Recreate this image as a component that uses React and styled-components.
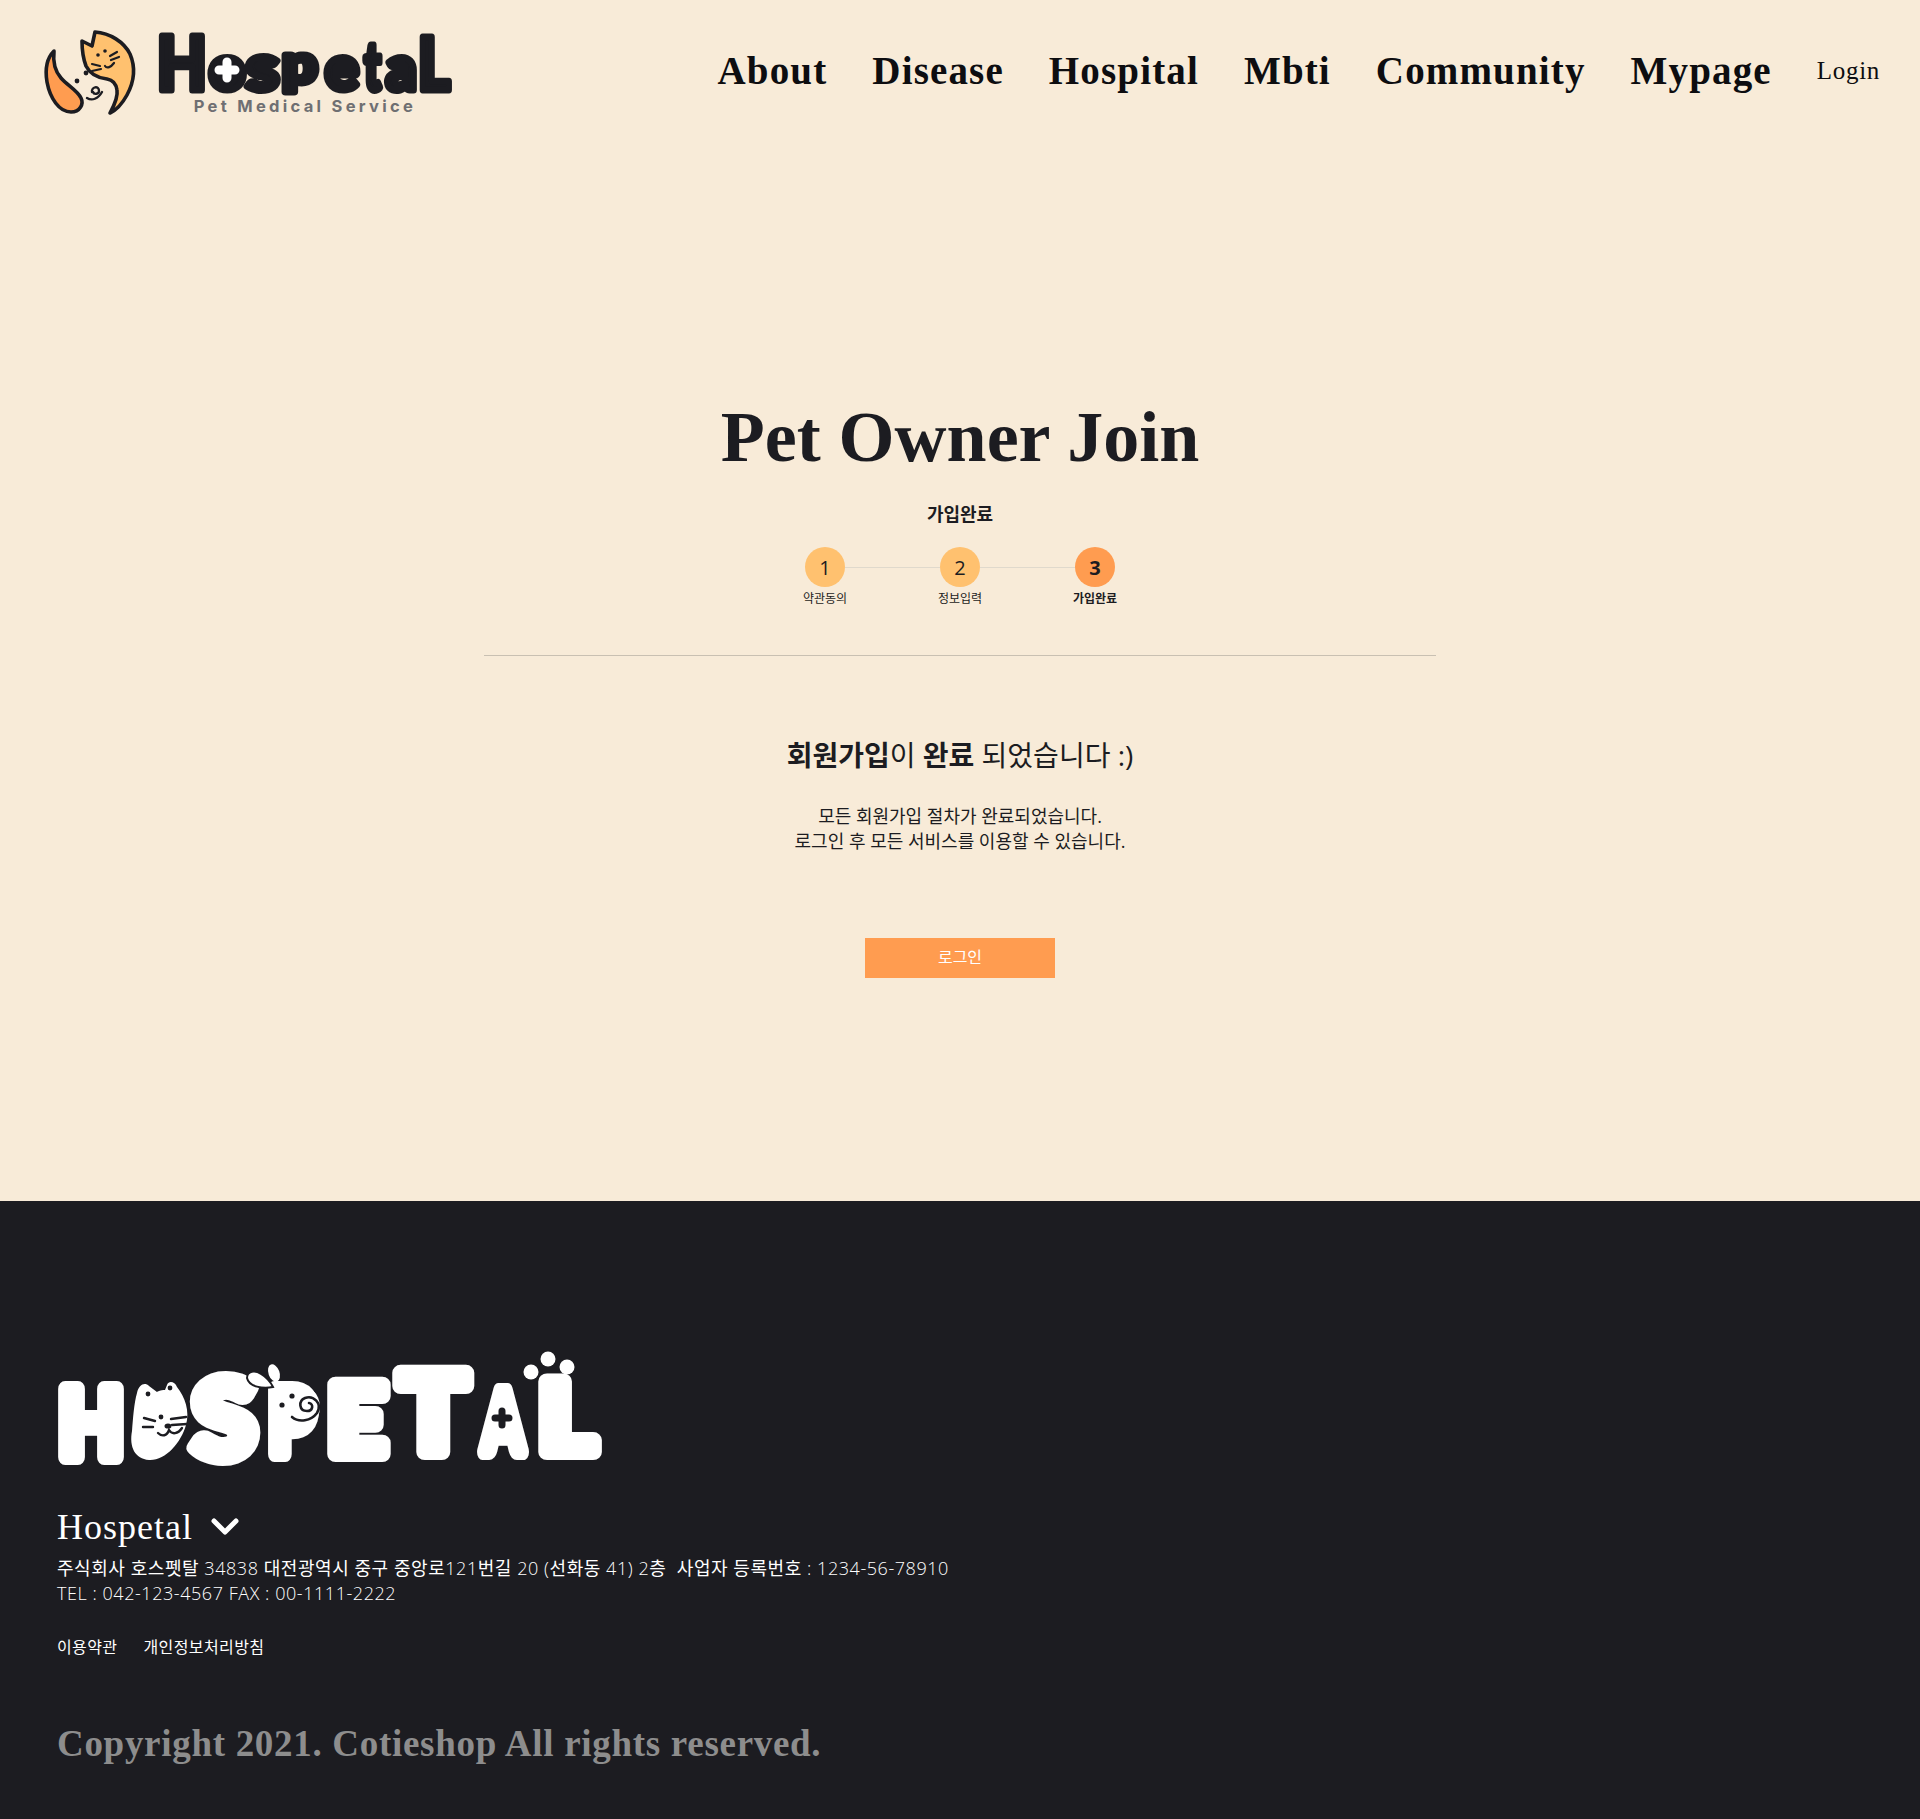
import React from "react";
import styled, { createGlobalStyle } from "styled-components";

const SERIF = '"Liberation Serif", "Noto Serif", serif';
const SANS = '"Open Sans", "Noto Sans CJK KR", sans-serif';

const GlobalStyle = createGlobalStyle`
  * { box-sizing: border-box; }
  body { margin: 0; background: #f8ebd8; font-family: ${SANS}; color: #1c1c21; }
`;

const Page = styled.div`
  width: 1920px;
  min-height: 1819px;
  display: flex;
  flex-direction: column;
`;

const Header = styled.header`
  height: 143px;
  padding: 20px 40px 0 30px;
  display: flex;
  justify-content: space-between;
  align-items: flex-start;
`;

const Brand = styled.a`
  display: flex;
  gap: 5px;
`;

const BrandText = styled.div`
  display: flex;
  flex-direction: column;
  align-items: center;
  width: 300px;
`;

const BrandSub = styled.span`
  font-family: Inter, sans-serif;
  font-weight: 700;
  font-size: 16.5px;
  line-height: 16px;
  letter-spacing: 3.3px;
  color: #6f6f72;
`;

const LogoSvg = styled.svg`
  display: block;
  overflow: visible;
`;

const Nav = styled.nav`
  display: flex;
  align-items: center;
  gap: 45px;
  padding-top: 27px;
`;

const NavLink = styled.a`
  font-family: ${SERIF};
  font-weight: 700;
  font-size: 39px;
  line-height: 48px;
  letter-spacing: 1.15px;
  color: #0d0d10;
`;

const LoginLink = styled.a`
  font-family: ${SERIF};
  font-size: 25px;
  line-height: 48px;
  letter-spacing: 0.7px;
  color: #0d0d10;
`;

const Main = styled.main`
  height: 1058px;
  display: flex;
  flex-direction: column;
  align-items: center;
  padding-top: 252px;
`;

const Title = styled.h1`
  margin: 0;
  font-family: ${SERIF};
  font-weight: 700;
  font-size: 72px;
  line-height: 84px;
  letter-spacing: 0;
  color: #1c1c21;
`;

const StepTitle = styled.h2`
  margin: 22px 0 0;
  font-size: 18px;
  line-height: 26px;
  font-weight: 700;
`;

const Stepper = styled.ol`
  list-style: none;
  margin: 20px 0 0;
  padding: 0;
  display: flex;
  align-items: flex-start;
`;

const Step = styled.li`
  width: 40px;
  display: flex;
  flex-direction: column;
  align-items: center;
`;

const StepDot = styled.span`
  width: 40px;
  height: 40px;
  border-radius: 50%;
  display: flex;
  align-items: center;
  justify-content: center;
  font-size: 20px;
  font-weight: ${(p) => (p.$active ? 700 : 400)};
  background: ${(p) => (p.$active ? "#ff9c50" : "#ffc16f")};
`;

const StepLabel = styled.span`
  margin-top: 2px;
  font-size: 12px;
  line-height: 20px;
  white-space: nowrap;
  font-weight: ${(p) => (p.$active ? 700 : 400)};
`;

const StepLine = styled.li`
  width: 95px;
  height: 1px;
  margin-top: 20px;
  background: #e0d9cc;
`;

const Divider = styled.hr`
  width: 952px;
  height: 1px;
  margin: 46px 0 0;
  border: 0;
  background: #c9c0b2;
`;

const Notice = styled.h3`
  margin: 79px 0 0;
  font-size: 28px;
  line-height: 40px;
  font-weight: 400;
`;

const Body = styled.p`
  margin: 29px 0 0;
  font-size: 18px;
  line-height: 25px;
  text-align: center;
`;

const LoginButton = styled.button`
  width: 190px;
  height: 40px;
  margin-top: 84px;
  padding: 0 0 5px;
  border: 0;
  background: #ff9c50;
  color: #fff;
  font-family: ${SANS};
  font-size: 16px;
`;

const Footer = styled.footer`
  flex: 1;
  background: #1c1c21;
  color: #fff;
  padding: 150px 57px 0;
  display: flex;
  flex-direction: column;
  align-items: flex-start;
`;

const FooterHead = styled.div`
  display: flex;
  align-items: center;
  gap: 18px;
  margin-top: 29px;
`;

const FooterName = styled.h4`
  margin: 0;
  font-family: ${SERIF};
  font-weight: 400;
  font-size: 36px;
  line-height: 44px;
  letter-spacing: 1px;
`;

const Address = styled.p`
  margin: 7px 0 0;
  font-size: 18px;
  line-height: 25px;
  font-weight: 300;
  letter-spacing: 0.55px;
`;

const Hangul = styled.span`
  font-weight: 400;
`;

const FooterLinks = styled.div`
  display: flex;
  gap: 26px;
  margin-top: 30px;
  font-size: 16px;
  line-height: 22px;
  letter-spacing: 0.4px;
`;

const Copyright = styled.p`
  margin: 62px 0 0;
  font-family: ${SERIF};
  font-weight: 700;
  font-size: 37px;
  line-height: 48px;
  letter-spacing: 0.7px;
  color: #8d8d8d;
`;

function MarkIcon() {
  return (
    <LogoSvg width="120" height="100" viewBox="0 0 120 100" fill="none" stroke="#1c1c21" strokeWidth="3.6" strokeLinecap="round" strokeLinejoin="round">
      <path d="M24 31C17 38 15 50 17 62C20 78 29 92 41 92C50 92 54 84 51 78C47 70 38 66 31 58C24 50 23 40 24 31Z" fill="#ff9c50" />
      <path d="M52 21L62 26L65 12C80 13 94 22 100 34C106 48 104 62 97 75C92 84 87 90 80 93C85 84 88 76 87 70C86 63 83 60 77 59C68 58 60 54 56 46C53 38 52 29 52 21Z" fill="#ffc16f" />
      <path d="M62 44L70 46M62 51L71 49M80 36L87 32M81 40L89 37M75 46C77 49 81 47 84 43" strokeWidth="2.2" />
      <circle cx="68" cy="35" r="1.8" fill="#1c1c21" stroke="none" />
      <circle cx="75" cy="31" r="1.8" fill="#1c1c21" stroke="none" />
      <circle cx="56" cy="53" r="2.4" fill="#1c1c21" stroke="none" />
      <circle cx="47" cy="61" r="2.4" fill="#1c1c21" stroke="none" />
      <path d="M57 78C62 81 68 79 72 72M62 72C61 67 69 65 69 71C69 74 64 75 63 72" strokeWidth="2.4" />
    </LogoSvg>
  );
}

// letters are real text, thick round stroke gives the bubble shape
const WORD_DARK = [
  ["H", 2, 69.5, 0.87, 74],
  ["o", 54, 69.5, 1, 63],
  ["s", 91, 69.5, 1.15, 65],
  ["p", 127, 63, 1.15, 54],
  ["e", 170, 69.5, 1, 63],
  ["t", 209, 69.5, 0.68, 66],
  ["a", 231, 69.5, 0.95, 63],
  ["L", 263, 69.5, 0.85, 72],
];

function WordMark() {
  return (
    <LogoSvg width="300" height="78" viewBox="0 0 300 78">
      <g fill="#1c1c21" stroke="#1c1c21" strokeWidth="7" strokeLinejoin="round" fontFamily="Lato, sans-serif" fontWeight="900">
        {WORD_DARK.map(([ch, x, y, sx, size], i) => (
          <text key={i} transform={`translate(${x} ${y}) scale(${sx} 1)`} fontSize={size}>{ch}</text>
        ))}
      </g>
      <path d="M72 42V58M64 50H80" stroke="#fff" strokeWidth="9" strokeLinecap="round" />
    </LogoSvg>
  );
}

const WORD_LIGHT = [
  ["H", 2, 106, 0.89, 93],
  ["O", 88, 95, 0.62, 62],
  ["S", 136, 106, 1.07, 106],
  ["P", 212, 103, 0.8, 90],
  ["E", 271, 103, 1.05, 96],
  ["T", 342, 101, 1.05, 108],
  ["A", 426, 101, 0.68, 84],
  ["L", 482, 101, 1.1, 97],
];

function FooterLogo() {
  return (
    <LogoSvg width="560" height="125" viewBox="0 0 560 125">
      <g fill="#fff" stroke="#fff" strokeLinejoin="round" strokeWidth="16" fontFamily="Lato, sans-serif" fontWeight="900">
        {WORD_LIGHT.map(([ch, x, y, sx, size], i) => (
          <text key={i} transform={`translate(${x} ${y}) scale(${sx} 1)`} fontSize={size}>{ch}</text>
        ))}
      </g>
      {/* cat head over the O */}
      <path d="M80 42C82 33 88 31 92 35L100 41C104 39 106 39 108 39L110 34C112 29 118 31 120 36C128 46 133 60 129 74C124 92 108 110 92 109C78 108 72 96 75 80C76 68 77 52 80 42Z" fill="#fff" />
      <g fill="none" stroke="#1c1c21" strokeWidth="2.4" strokeLinecap="round">
        <path d="M87 67L98 70M86 76L96 76M114 68L129 66M115 74L130 73" />
        <path d="M101 82C105 86 110 85 112 79C115 84 121 83 125 77" />
      </g>
      <circle cx="91" cy="43" r="2.4" fill="#1c1c21" />
      <circle cx="113" cy="37" r="2.4" fill="#1c1c21" />
      <circle cx="104" cy="66" r="2.4" fill="#1c1c21" />
      <ellipse cx="111" cy="75" rx="3.5" ry="2.6" fill="#1c1c21" />
      {/* dog ear and face on the P */}
      <ellipse cx="238" cy="56" rx="25" ry="24" fill="#fff" />
      <path d="M190 27C190 20 198 19 204 23C209 26 213 30 216 36C206 38 192 36 190 27Z" fill="#fff" stroke="#1c1c21" strokeWidth="2" />
      <ellipse cx="217" cy="22" rx="5.5" ry="9" fill="#fff" transform="rotate(-20 217 22)" />
      <path d="M235 66C242 72 254 70 260 62C266 52 256 44 248 47C241 50 242 60 250 60C256 60 257 53 252 52" fill="none" stroke="#1c1c21" strokeWidth="2.6" strokeLinecap="round" />
      <circle cx="235" cy="45" r="2.6" fill="#1c1c21" />
      <circle cx="225" cy="54" r="2.6" fill="#1c1c21" />
      {/* plus in the A */}
      <path d="M445 60V74M438 67H452" stroke="#1c1c21" strokeWidth="7" strokeLinecap="round" />
      {/* paw dots over the L */}
      <circle cx="474" cy="21" r="7.500" fill="#fff" />
      <circle cx="491" cy="8" r="7.500" fill="#fff" />
      <circle cx="510" cy="16" r="7.500" fill="#fff" />
    </LogoSvg>
  );
}

function Chevron() {
  return (
    <svg width="28" height="18" viewBox="0 0 28 18" fill="none" stroke="#fff" strokeWidth="5" strokeLinecap="round" strokeLinejoin="round">
      <path d="M3 3L14 14L25 3" />
    </svg>
  );
}

const NAV_ITEMS = ["About", "Disease", "Hospital", "Mbti", "Community", "Mypage"];
const STEPS = [
  { n: 1, label: "약관동의" },
  { n: 2, label: "정보입력" },
  { n: 3, label: "가입완료", active: true },
];

export default function App() {
  return (
    <Page>
      <GlobalStyle />
      <Header>
        <Brand>
          <MarkIcon />
          <BrandText>
            <WordMark />
            <BrandSub>Pet Medical Service</BrandSub>
          </BrandText>
        </Brand>
        <Nav>
          {NAV_ITEMS.map((item) => (
            <NavLink key={item}>{item}</NavLink>
          ))}
          <LoginLink>Login</LoginLink>
        </Nav>
      </Header>
      <Main>
        <Title>Pet Owner Join</Title>
        <StepTitle>가입완료</StepTitle>
        <Stepper>
          {STEPS.map((s, i) => (
            <React.Fragment key={s.n}>
              {i > 0 && <StepLine />}
              <Step>
                <StepDot $active={s.active}>{s.n}</StepDot>
                <StepLabel $active={s.active}>{s.label}</StepLabel>
              </Step>
            </React.Fragment>
          ))}
        </Stepper>
        <Divider />
        <Notice>
          <b>회원가입</b>이 <b>완료</b> 되었습니다 :)
        </Notice>
        <Body>
          모든 회원가입 절차가 완료되었습니다.
          <br />
          로그인 후 모든 서비스를 이용할 수 있습니다.
        </Body>
        <LoginButton>로그인</LoginButton>
      </Main>
      <Footer>
        <FooterLogo />
        <FooterHead>
          <FooterName>Hospetal</FooterName>
          <Chevron />
        </FooterHead>
        <Address>
          <Hangul>주식회사 호스펫탈</Hangul> 34838 <Hangul>대전광역시 중구 중앙로</Hangul>121<Hangul>번길</Hangul> 20 (<Hangul>선화동</Hangul> 41) 2<Hangul>층</Hangul> &nbsp;<Hangul>사업자 등록번호</Hangul> : 1234-56-78910
          <br />
          TEL : 042-123-4567 FAX : 00-1111-2222
        </Address>
        <FooterLinks>
          <a>이용약관</a>
          <a>개인정보처리방침</a>
        </FooterLinks>
        <Copyright>Copyright 2021. Cotieshop All rights reserved.</Copyright>
      </Footer>
    </Page>
  );
}
